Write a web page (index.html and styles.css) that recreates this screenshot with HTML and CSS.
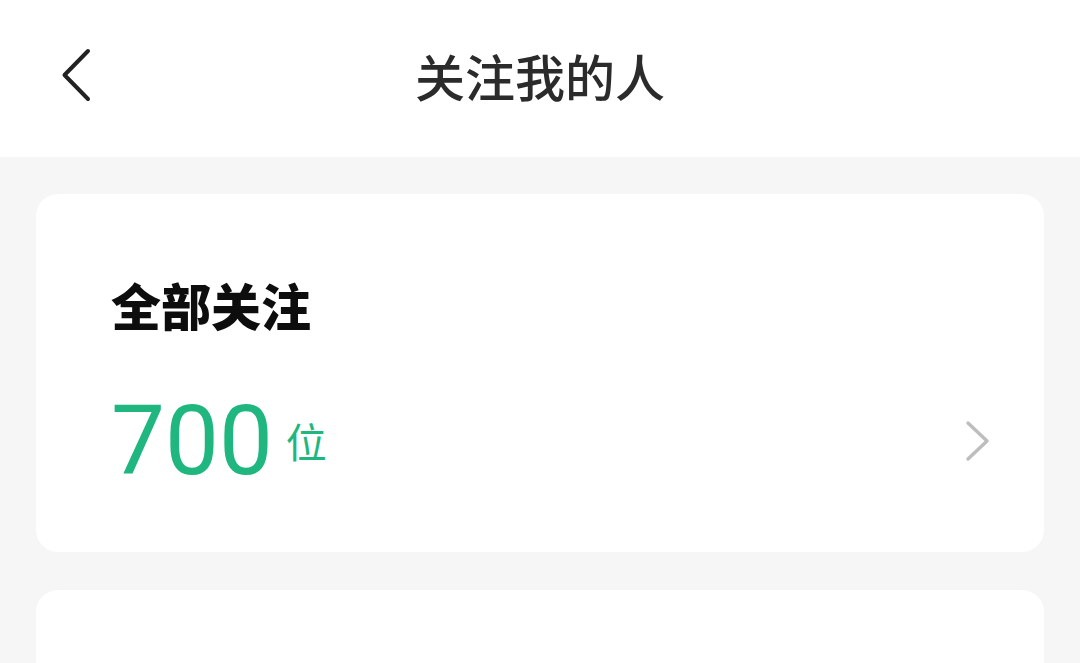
FILE: index.html
```html
<!DOCTYPE html>
<html lang="zh-CN">
<head>
<meta charset="utf-8">
<title>关注我的人</title>
<link rel="stylesheet" href="styles.css">
</head>
<body>
<div class="page">
  <header class="topbar">
    <div class="topbar-left">
      <svg class="back-icon" width="30" height="54" viewBox="0 0 30 54" aria-hidden="true">
        <polyline points="27,3 3.5,27 27,51" fill="none" stroke="#222" stroke-width="4" stroke-linecap="round" stroke-linejoin="round"/>
      </svg>
    </div>
    <h1 class="topbar-title">关注我的人</h1>
    <div class="topbar-right"></div>
  </header>
  <main class="content">
    <section class="card card-summary">
      <h2 class="card-title">全部关注</h2>
      <div class="count-row">
        <span class="count-num">700</span>
        <span class="count-unit">位</span>
        <svg class="chevron" width="26" height="42" viewBox="0 0 26 42" aria-hidden="true">
          <polyline points="3,3 22,21 3,39" fill="none" stroke="#bdbdbd" stroke-width="3.4" stroke-linecap="round" stroke-linejoin="round"/>
        </svg>
      </div>
    </section>
    <section class="card card-next"></section>
  </main>
</div>
</body>
</html>
```

FILE: styles.css
```css
html, body {
  margin: 0;
  padding: 0;
}
body {
  width: 1080px;
  height: 663px;
  overflow: hidden;
  background: #f6f6f6;
  font-family: "Noto Sans CJK SC", "Noto Sans", sans-serif;
}
.page {
  display: flex;
  flex-direction: column;
  height: 663px;
}
.topbar {
  flex: none;
  height: 157px;
  box-sizing: border-box;
  padding-bottom: 8px;
  background: #ffffff;
  display: grid;
  grid-template-columns: 1fr auto 1fr;
  align-items: center;
}
.topbar-left {
  padding-left: 61px;
  display: flex;
  align-items: center;
}
.back-icon {
  display: block;
}
.topbar-title {
  margin: 0;
  font-size: 50px;
  font-weight: 500;
  line-height: 1;
  color: #2b2b2b;
}
.content {
  flex: 1;
  min-height: 0;
  padding: 37px 36px 0;
  display: flex;
  flex-direction: column;
  gap: 38px;
}
.card {
  background: #ffffff;
  border-radius: 22px;
}
.card-summary {
  flex: none;
  height: 358px;
  box-sizing: border-box;
  padding: 85px 53px 0 75px;
}
.card-next {
  flex: 1;
  border-radius: 22px 22px 0 0;
}
.card-title {
  margin: 0;
  font-size: 50px;
  font-weight: 900;
  line-height: 1;
  color: #0d0d0d;
}
.count-row {
  margin-top: 64px;
  display: flex;
  align-items: center;
}
.count-num {
  font-family: Roboto, "Noto Sans", sans-serif;
  font-size: 96px;
  line-height: 1;
  font-weight: 400;
  color: #1fb77f;
}
.count-unit {
  margin-left: 13px;
  margin-top: -2px;
  font-size: 41px;
  line-height: 1;
  color: #1fb77f;
}
.chevron {
  margin-left: auto;
  display: block;
}
```
